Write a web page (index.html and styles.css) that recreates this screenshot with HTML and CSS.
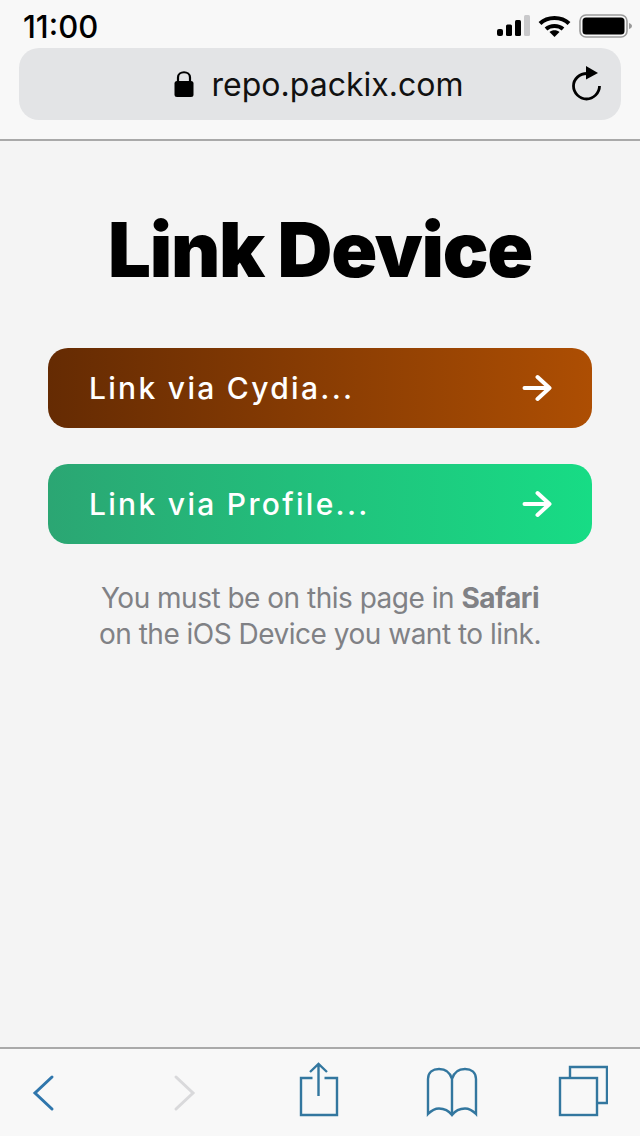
FILE: index.html
```html
<!DOCTYPE html>
<html lang="en">
<head>
    <meta charset="UTF-8">
    <title>Link Device</title>
    <link rel="stylesheet" href="styles.css">
</head>
<body>
    <header class="browser-bar">
        <div class="status">
            <span class="time">11:00</span>
            <div class="status-icons">
                <svg width="33" height="22" viewBox="0 0 33 22">
                    <rect x="0" y="14" width="6" height="7" rx="2" fill="#000"/>
                    <rect x="9" y="9.500" width="6" height="11.500" rx="1.500" fill="#000"/>
                    <rect x="18" y="5" width="6" height="16" rx="1.500" fill="#000"/>
                    <rect x="27" y="0" width="6" height="21" rx="1.500" fill="#c9c9cb"/>
                </svg>
                <svg width="33" height="22" viewBox="0 0 33 22">
                    <path d="M2 8.500C9.500 1 23.500 1 31 8.500" fill="none" stroke="#000" stroke-width="4"/>
                    <path d="M8 14C12.500 10 20.500 10 25 14" fill="none" stroke="#000" stroke-width="4"/>
                    <path d="M11.500 17L16.500 22L21.500 17C19 14.800 14 14.800 11.500 17Z" fill="#000"/>
                </svg>
                <svg width="53" height="24" viewBox="0 0 53 24">
                    <rect x="1" y="1" width="47" height="22" rx="6" fill="none" stroke="#9a9a9a" stroke-width="1.600"/>
                    <rect x="3.500" y="3.500" width="42" height="17" rx="3.500" fill="#000"/>
                    <path d="M50 9C51.500 9.500 53 10.500 53 12C53 13.500 51.500 14.500 50 15Z" fill="#9a9a9a"/>
                </svg>
            </div>
        </div>
        <div class="url-bar">
            <div class="url">
                <svg width="22" height="30" viewBox="0 0 22 30">
                    <path d="M5 13V8.500C5 1.500 17 1.500 17 8.500V13" fill="none" stroke="#000" stroke-width="2.200"/>
                    <rect x="1.500" y="12" width="19" height="16" rx="2.500" fill="#000"/>
                </svg>
                <span>repo.packix.com</span>
            </div>
            <svg class="reload" width="32" height="38" viewBox="0 0 32 38">
                <path d="M17 8.500C9.500 8.500 3.500 14 3.500 21C3.500 28 9.500 34 16.500 34C23.500 34 29.500 28 29.500 21" fill="none" stroke="#000" stroke-width="2.800"/>
                <path d="M16 1L28 8L16 14.500Z" fill="#000"/>
            </svg>
        </div>
    </header>

    <main class="content">
        <h1>Link Device</h1>
        <a class="link-btn cydia" href="#">
            <span>Link via Cydia...</span>
            <svg width="30" height="28" viewBox="0 0 30 28">
                <path d="M2.500 14H27M15.500 3L27.500 14L15.500 25" fill="none" stroke="#fff" stroke-width="4" stroke-linecap="round" stroke-linejoin="round"/>
            </svg>
        </a>
        <a class="link-btn profile" href="#">
            <span>Link via Profile...</span>
            <svg width="30" height="28" viewBox="0 0 30 28">
                <path d="M2.500 14H27M15.500 3L27.500 14L15.500 25" fill="none" stroke="#fff" stroke-width="4" stroke-linecap="round" stroke-linejoin="round"/>
            </svg>
        </a>
        <p class="note">You must be on this page in <b>Safari</b><br>on the iOS Device you want to link.</p>
    </main>

    <footer class="toolbar">
        <svg width="24" height="60" viewBox="0 0 24 60">
            <path d="M21 16L4 32L21 48" fill="none" stroke="#2f76ac" stroke-width="3" stroke-linecap="round"/>
        </svg>
        <svg width="24" height="60" viewBox="0 0 24 60">
            <path d="M4 16L21 32L4 48" fill="none" stroke="#d9d9db" stroke-width="3" stroke-linecap="round"/>
        </svg>
        <svg width="40" height="60" viewBox="0 0 40 60">
            <path d="M13.500 17H2V54H38V17H25.500" fill="none" stroke="#33779f" stroke-width="2.400"/>
            <path d="M19.500 3V35M11 11L19.500 3L28 11" fill="none" stroke="#33779f" stroke-width="2.400"/>
        </svg>
        <svg width="52" height="60" viewBox="0 0 52 60">
            <path d="M26 18C24 11 19 8 13 8C7 8 2 11 2 18V53C6 49 9 47.500 13 47.500C19 47.500 23 50 26 54C29 50 33 47.500 39 47.500C43 47.500 46 49 50 53V18C50 11 45 8 39 8C33 8 28 11 26 18V54" fill="none" stroke="#33779f" stroke-width="2.400"/>
        </svg>
        <svg width="50" height="60" viewBox="0 0 50 60">
            <path d="M12 16V6H49V42H39" fill="none" stroke="#33779f" stroke-width="2.400"/>
            <rect x="2" y="17" width="37" height="37" fill="none" stroke="#33779f" stroke-width="2.400"/>
        </svg>
    </footer>
</body>
</html>
```

FILE: styles.css
```css
* {
    box-sizing: border-box;
}
html, body {
    height: 100%;
}
body {
    margin: 0;
    height: 1136px;
    display: flex;
    flex-direction: column;
    background: #f4f4f4;
    color: #000;
    font-family: Inter, "Liberation Sans", sans-serif;
    overflow: hidden;
}
.browser-bar {
    height: 141px;
    flex: none;
    background: #f8f8f8;
    border-bottom: 2px solid #a9a9a9;
    padding: 0 19px;
}
.status {
    height: 48px;
    display: flex;
    justify-content: space-between;
    align-items: center;
    padding: 4px 0 0 4px;
    margin-right: -19px;
}
.time {
    font-size: 31px;
    font-weight: 500;
}
.status-icons {
    display: flex;
    align-items: center;
    gap: 8px;
    padding-right: 8px;
}
.url-bar {
    height: 72px;
    border-radius: 20px;
    background: #e3e4e6;
    position: relative;
    display: flex;
    justify-content: center;
    align-items: center;
}
.url {
    display: flex;
    align-items: center;
    gap: 17px;
    padding-right: 4px;
    font-size: 32px;
    color: #111;
}
.reload {
    position: absolute;
    right: 19px;
    top: 17px;
}
.content {
    flex: 1;
    padding: 0 48px;
}
h1 {
    margin: 68px 0 59px;
    text-align: center;
    font-size: 76px;
    line-height: 80px;
    font-weight: 900;
    letter-spacing: -1.300px;
}
.link-btn {
    height: 80px;
    margin-bottom: 36px;
    padding: 0 40px 0 41px;
    display: flex;
    justify-content: space-between;
    align-items: center;
    border-radius: 20px;
    color: #fff;
    font-size: 30px;
    font-weight: 500;
    letter-spacing: 2.300px;
    text-decoration: none;
}
.cydia {
    background: linear-gradient(90deg, #652b03, #ad4e03);
}
.profile {
    background: linear-gradient(90deg, #2ba673, #17dc85);
}
.note {
    margin: 0;
    text-align: center;
    font-size: 28px;
    line-height: 36px;
    letter-spacing: -0.500px;
    color: #808185;
}
.toolbar {
    height: 89px;
    flex: none;
    background: #f8f8f8;
    border-top: 2px solid #a9a9a9;
    display: grid;
    grid-template-columns: 141px 127px 127px 132px auto;
    align-items: center;
    padding: 0 0 4px 31px;
}
```
